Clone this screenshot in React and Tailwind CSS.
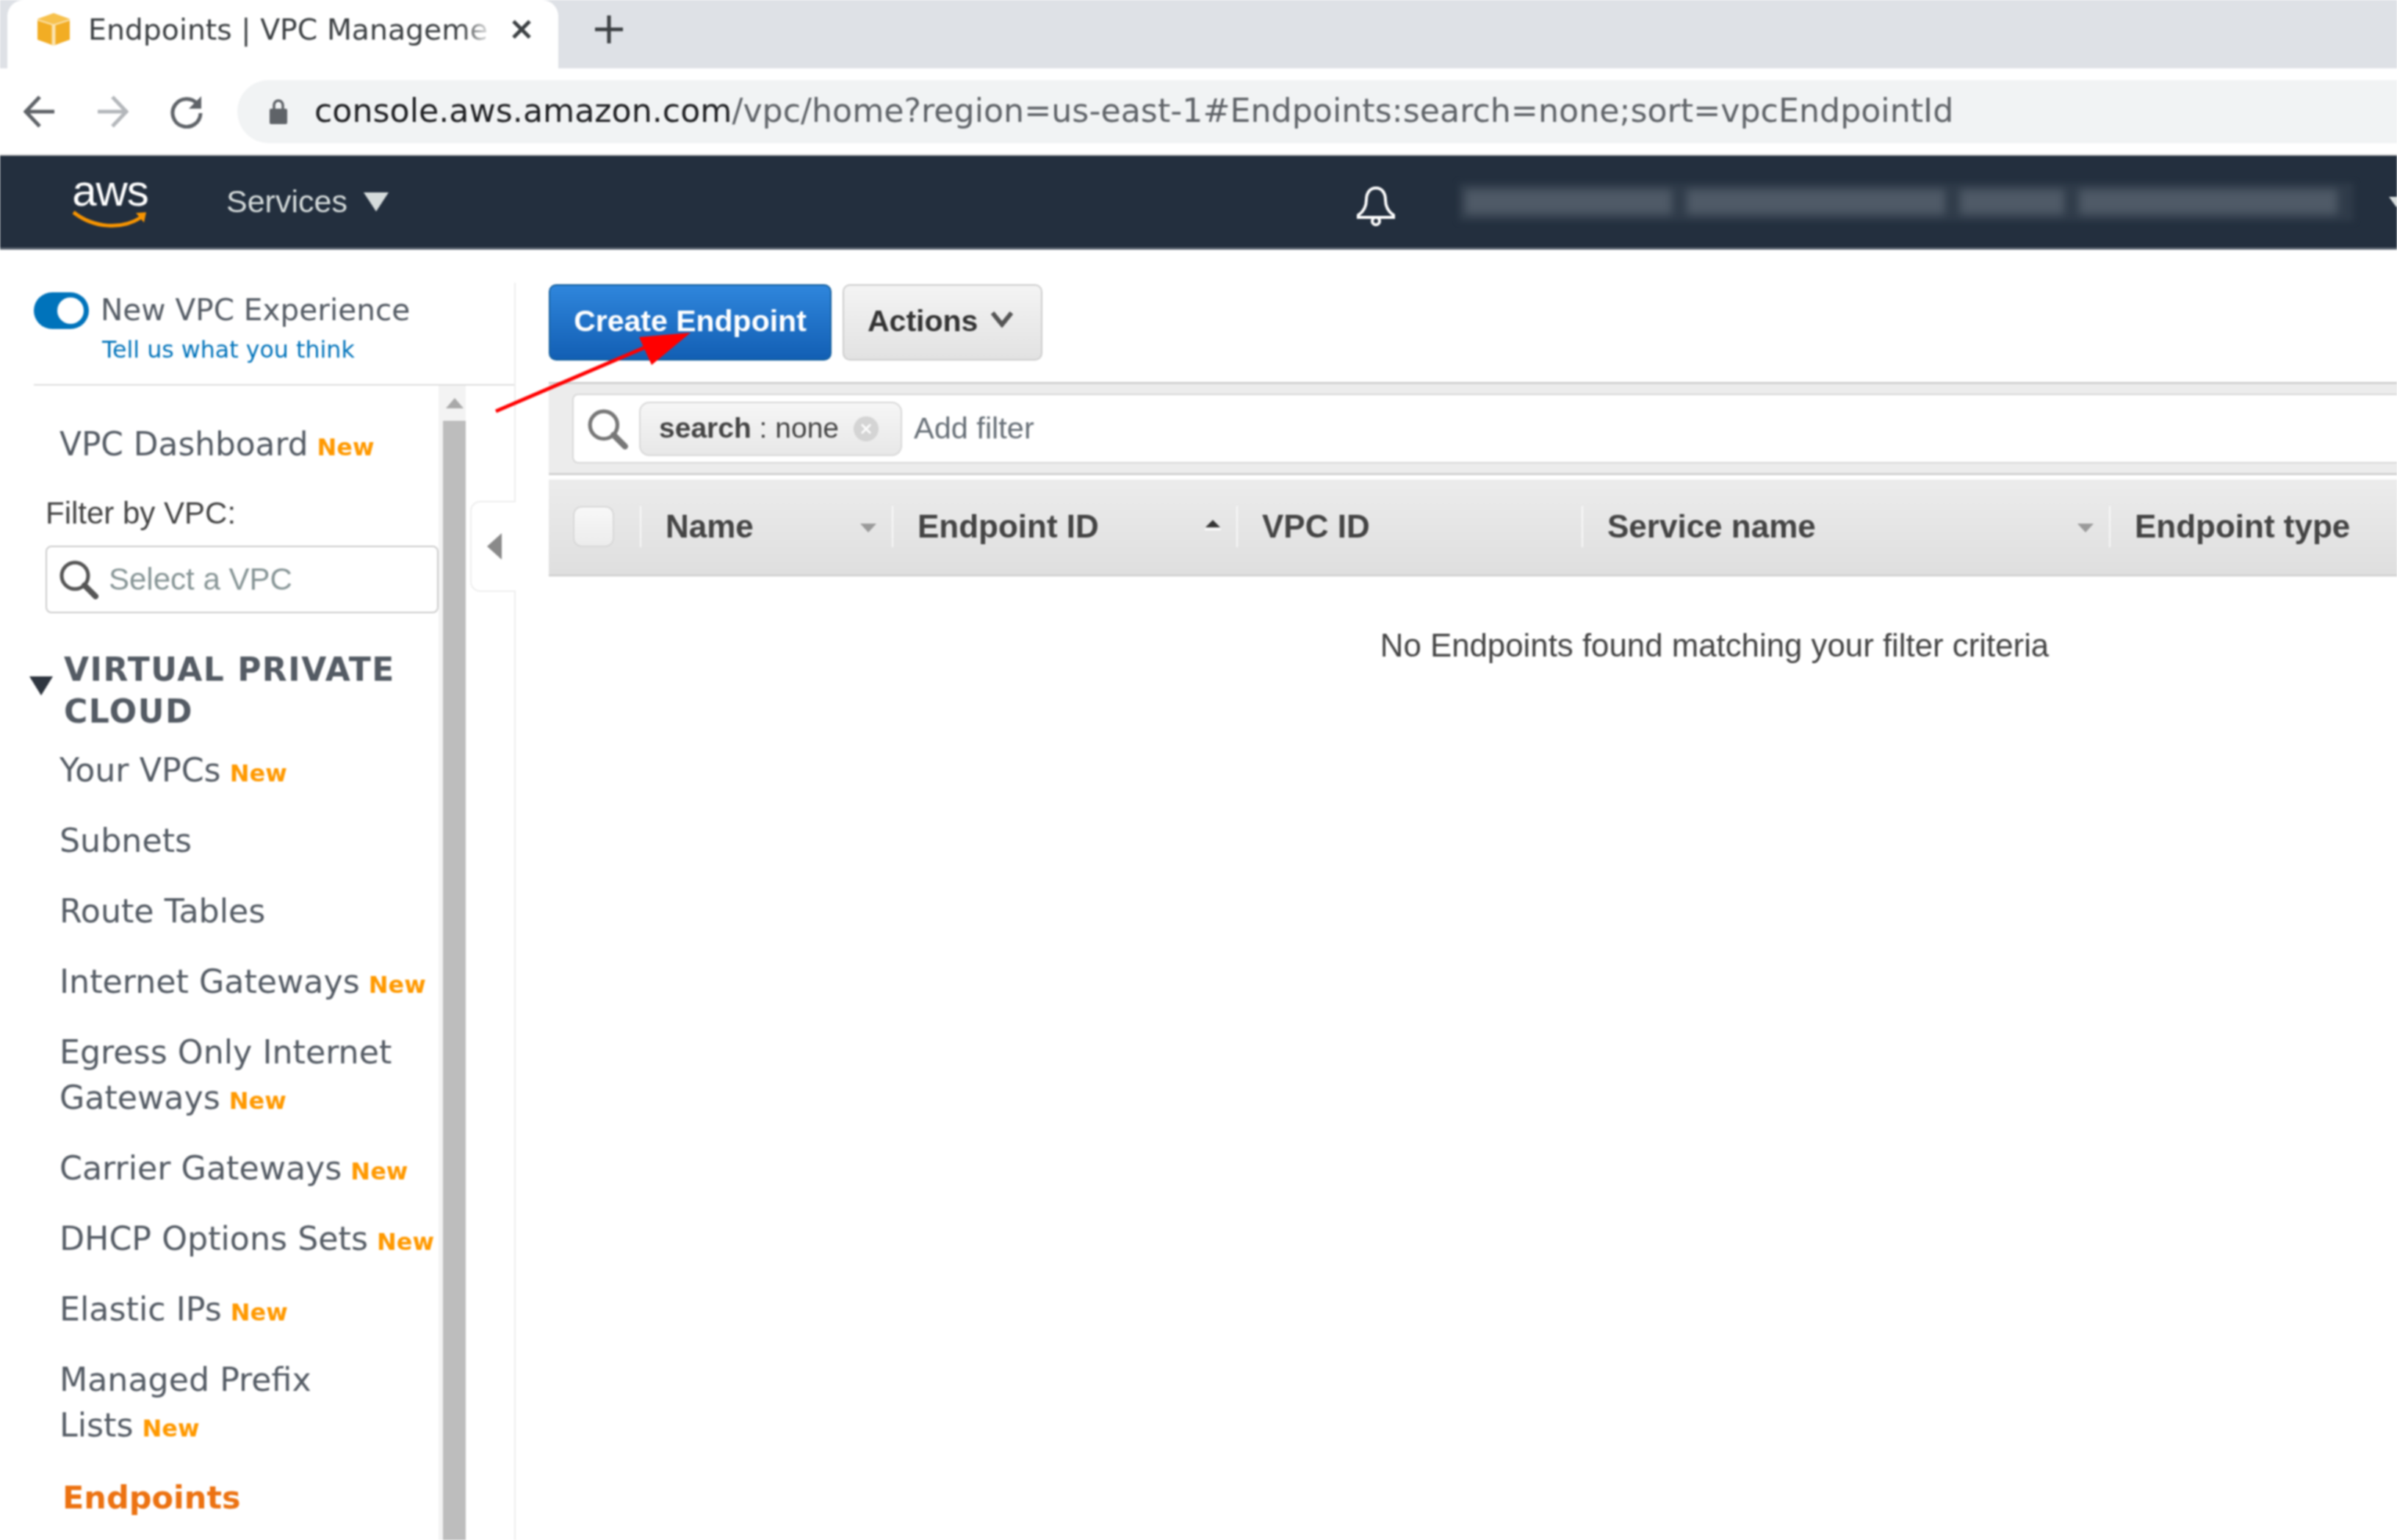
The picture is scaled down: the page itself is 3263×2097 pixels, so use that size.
const dv = "[font-family:'DejaVu_Sans',sans-serif]";

function NewTag() {
  return <span className="ml-[12px] text-[32px] leading-none font-bold text-[#ff9900]">New</span>;
}

function Item({ label, second, isNew, active }) {
  return (
    <div className={`leading-[62px] ${active ? "mt-[36px] ml-[4px] text-[43px] font-bold text-[#ec7211]" : "mt-[34px] text-[44.3px] text-[#545b64]"}`}>
      {label}
      {second ? <br /> : null}
      {second}
      {isNew ? <NewTag /> : null}
    </div>
  );
}

function Column({ label, width, arrow }) {
  return (
    <div className={`${width} h-[56px] shrink-0 border-l-[2px] border-[#f8f8f8] pl-[33px] pr-[20px] flex items-center justify-between`}>
      <span className="text-[44px] font-bold text-[#444444]">{label}</span>
      {arrow === "down" ? (
        <svg width="24" height="14" viewBox="0 0 24 14" className="mt-[4px]"><path d="M1 1h22L12 13z" fill="#9a9a9a" /></svg>
      ) : null}
      {arrow === "up" ? (
        <svg width="24" height="16" viewBox="0 0 24 16" className="-mt-[4px]"><path d="M2 11h20L12 1z" fill="#333333" /><path d="M1 14h22" stroke="#ffffff" strokeWidth="2" /></svg>
      ) : null}
    </div>
  );
}

function SearchGlyph({ size, color }) {
  return (
    <svg width={size} height={size} viewBox="0 0 54 54" fill="none" stroke={color} strokeLinecap="round">
      <circle cx="22" cy="22" r="18" strokeWidth="5" />
      <path d="M35 35l15 15" strokeWidth="8" />
    </svg>
  );
}

export default function App() {
  return (
    <div className="relative w-[3263px] h-[2097px] overflow-hidden bg-white flex flex-col blur-[0.8px] [font-family:'Liberation_Sans',Arial,sans-serif]">
      {/* tab strip */}
      <div className={`h-[93px] shrink-0 bg-[#dee1e6] flex items-stretch pl-[10px] ${dv}`}>
        <div className="w-[750px] h-[93px] bg-white rounded-t-[22px] flex items-center pl-[40px] pb-[14px] relative">
          <svg width="46" height="44" viewBox="0 0 46 44" className="shrink-0">
            <path d="M1 8L23 0l22 8v28l-22 8-22-8z" fill="#f2ad24" />
            <path d="M1 8l22 7 22-7-22-8z" fill="#f7c14c" />
            <path d="M23 15v29" stroke="#fbe3ae" strokeWidth="5" />
            <path d="M1 9l22 7 22-7" stroke="#fbe3ae" strokeWidth="2" fill="none" />
          </svg>
          <div className="ml-[24px] w-[552px] whitespace-nowrap text-[39.4px] leading-[60px] text-[#3c4043] relative">
            Endpoints | VPC Manageme
            <div className="absolute right-0 top-0 w-[44px] h-full bg-gradient-to-r from-transparent to-white" />
          </div>
          <svg width="28" height="28" viewBox="0 0 28 28" className="ml-[24px] shrink-0">
            <path d="M3 3l22 22M25 3L3 25" stroke="#3c4043" strokeWidth="5" />
          </svg>
        </div>
        <div className="ml-[49px] flex items-center pb-[14px]">
          <svg width="40" height="40" viewBox="0 0 40 40"><path d="M20 1v38M1 20h38" stroke="#3c4043" strokeWidth="5" /></svg>
        </div>
      </div>

      {/* toolbar */}
      <div className={`h-[119px] shrink-0 bg-white border-b-[2px] border-[#d4d4d4] flex items-center pl-[32px] ${dv}`}>
        <svg width="44" height="44" viewBox="0 0 44 44" fill="none" stroke="#5f6368" strokeWidth="5"><path d="M42 22H4M22 2L3 22l19 20" /></svg>
        <svg width="44" height="44" viewBox="0 0 44 44" fill="none" stroke="#b4b7bb" strokeWidth="5" className="ml-[55px]"><path d="M2 22h38M22 2l19 20-19 20" /></svg>
        <svg width="46" height="46" viewBox="0 0 46 46" fill="none" className="ml-[56px]">
          <path d="M38 13A19 19 0 1 0 42 25" stroke="#5f6368" strokeWidth="5" />
          <path d="M43 2v17H26z" fill="#5f6368" />
        </svg>
        <div className="ml-[46px] flex-1 h-[86px] bg-[#f1f3f4] rounded-l-[43px] flex items-center pl-[43px]">
          <svg width="26" height="36" viewBox="0 0 26 36" className="shrink-0">
            <path d="M7 16V9a6 6 0 0 1 12 0v7" fill="none" stroke="#5f6368" strokeWidth="3.5" />
            <rect x="1" y="14" width="24" height="21" rx="2" fill="#5f6368" />
          </svg>
          <div className="ml-[36px] text-[44.3px] whitespace-nowrap">
            <span className="text-[#202124]">console.aws.amazon.com</span>
            <span className="text-[#5f6368]">/vpc/home?region=us-east-1#Endpoints:search=none;sort=vpcEndpointId</span>
          </div>
        </div>
      </div>

      {/* aws nav */}
      <div className="h-[128px] shrink-0 bg-[#232f3e] border-b-[3px] border-[#5b6570] flex items-center pl-[99px] pr-[6px]">
        <div className="w-[102px] flex flex-col items-center -mt-[2px]">
          <span className="text-[60px] leading-[44px] text-white tracking-[-1px]">aws</span>
          <svg width="102" height="24" viewBox="0 0 102 24" fill="none" className="mt-[4px]">
            <path d="M1 3c28 22 66 24 92 7" stroke="#f79400" strokeWidth="5" />
            <path d="M86 4l14-1-3 14z" fill="#f79400" />
          </svg>
        </div>
        <span className="ml-[107px] text-[43px] text-[#d5dbdb]">Services</span>
        <svg width="36" height="26" viewBox="0 0 36 26" className="ml-[21px] shrink-0"><path d="M1 0h34L18 26z" fill="#d5dbdb" /></svg>
        <svg width="54" height="54" viewBox="0 0 54 54" fill="none" stroke="#ffffff" strokeWidth="4" className="ml-[1316px] mt-[12px] shrink-0">
          <path d="M27 2c-9 0-13 8-13 16 0 10-5 17-11 21v3h48v-3c-6-4-11-11-11-21 0-8-4-16-13-16z" />
          <circle cx="27" cy="47" r="5" />
        </svg>
        <div className="ml-[86px] w-[1218px] h-[52px] shrink-0 bg-[#2f3b49] blur-[4px] flex items-center gap-[20px] pl-[8px]">
          <div className="w-[282px] h-[34px] bg-[#4f5a67] blur-[4px]" />
          <div className="w-[352px] h-[34px] bg-[#4f5a67] blur-[4px]" />
          <div className="w-[142px] h-[34px] bg-[#4f5a67] blur-[4px]" />
          <div className="w-[352px] h-[34px] bg-[#4f5a67] blur-[4px]" />
        </div>
        <svg width="20" height="14" viewBox="0 0 20 14" className="ml-[48px] shrink-0"><path d="M0 0h20L10 14z" fill="#d5dbdb" /></svg>
      </div>

      {/* body */}
      <div className="flex-1 min-h-0 pt-[45px] flex">
        {/* sidebar */}
        <div className="relative w-[702px] shrink-0 border-r-[2px] border-[#eeeeee] pl-[46px] flex flex-col text-[#545b64]">
          <div className={`h-[140px] shrink-0 border-b-[2px] border-[#dddddd] ${dv}`}>
            <div className="flex items-center pt-[13px]">
              <div className="w-[75px] h-[50px] rounded-full bg-[#0073bb] flex items-center justify-end pr-[7px]">
                <div className="w-[36px] h-[36px] rounded-full bg-white" />
              </div>
              <span className="ml-[16px] -mt-[2px] text-[40.6px] leading-[50px] text-[#545b64]">New VPC Experience</span>
            </div>
            <div className="ml-[93px] mt-[3px] text-[31.7px] leading-[50px] text-[#0073bb]">Tell us what you think</div>
          </div>
          <div className="flex-1 min-h-0 flex -ml-[46px] overflow-hidden">
            <div className="w-[597px] shrink-0">
              <div className={`pl-[81px] pt-[49px] text-[43.8px] leading-[62px] whitespace-nowrap ${dv}`}>
                VPC Dashboard<NewTag />
              </div>
              <div className="pl-[62px] mt-[32px] text-[42px] leading-[62px] text-[#444444]">Filter by VPC:</div>
              <div className="ml-[62px] mt-[13px] h-[92px] w-[535px] border-[2px] border-[#cccccc] rounded-[8px] flex items-center pl-[16px]">
                <SearchGlyph size={54} color="#555555" />
                <span className="ml-[14px] -mt-[2px] text-[42px] text-[#879596]">Select a VPC</span>
              </div>
              <div className={`relative pl-[87px] mt-[48px] text-[44px] font-bold leading-[57px] tracking-[1.5px] ${dv}`}>
                <svg width="32" height="26" viewBox="0 0 32 26" className="absolute left-[40px] top-[38px]"><path d="M0 0h32L16 26z" fill="#2f3640" /></svg>
                VIRTUAL PRIVATE<br />CLOUD
              </div>
              <div className={`pl-[81px] -mt-[13px] whitespace-nowrap ${dv}`}>
                <Item label="Your VPCs" isNew />
                <Item label="Subnets" />
                <Item label="Route Tables" />
                <Item label="Internet Gateways" isNew />
                <Item label="Egress Only Internet" second="Gateways" isNew />
                <Item label="Carrier Gateways" isNew />
                <Item label="DHCP Options Sets" isNew />
                <Item label="Elastic IPs" isNew />
                <Item label="Managed Prefix" second="Lists" isNew />
                <Item label="Endpoints" active />
              </div>
            </div>
            <div className="w-[37px] shrink-0 bg-[#f3f3f3] flex flex-col items-end">
              <div className="h-[48px] w-[37px] flex items-center justify-center pl-[6px]">
                <svg width="24" height="14" viewBox="0 0 24 14"><path d="M0 14h24L12 0z" fill="#a9a9a9" /></svg>
              </div>
              <div className="flex-1 w-[31px] bg-[#bdbdbd]" />
            </div>
          </div>
          {/* collapse handle */}
          <div className="absolute left-[640px] top-[297px] w-[62px] h-[124px] bg-white border-[2px] border-r-0 border-[#eeeeee] rounded-l-[14px] flex items-center pl-[21px]">
            <svg width="20" height="36" viewBox="0 0 20 36"><path d="M20 0v36L0 18z" fill="#8a8a8a" /></svg>
          </div>
        </div>

        {/* main */}
        <div className="flex-1 min-w-0 overflow-hidden pl-[45px]">
          <div className="w-[3174px]">
            <div className="flex pt-[2px] gap-[15px]">
              <div className="w-[385px] h-[104px] rounded-[10px] border-[2px] border-[#15609f] bg-gradient-to-b from-[#2f86dc] to-[#125fb4] flex items-center justify-center pb-[2px] text-[41px] font-bold text-white">
                Create Endpoint
              </div>
              <div className="w-[272px] h-[104px] rounded-[10px] border-[2px] border-[#cccccc] bg-gradient-to-b from-[#f4f4f4] to-[#e2e2e2] flex items-center pl-[32px] pb-[2px]">
                <span className="text-[41px] font-bold text-[#333333]">Actions</span>
                <svg width="30" height="22" viewBox="0 0 30 22" fill="none" className="ml-[18px] -mt-[6px]">
                  <path d="M2 2l13 16L28 2" stroke="#555555" strokeWidth="6" />
                </svg>
              </div>
            </div>

            <div className="mt-[29px] h-[127px] bg-[#ececec] border-t-[3px] border-b-[3px] border-[#d2d2d2] pt-[13px] pl-[32px]">
              <div className="h-[95px] bg-white border-[2px] border-[#d8d8d8] rounded-l-[8px] flex items-center pl-[18px]">
                <SearchGlyph size={56} color="#777777" />
                <div className="ml-[15px] w-[358px] h-[74px] rounded-[14px] border-[2px] border-[#d8d8d8] bg-gradient-to-b from-[#f6f6f6] to-[#e8e8e8] flex items-center pl-[25px] whitespace-nowrap text-[39px] text-[#444444]">
                  <span className="font-bold">search</span>&nbsp;: none
                  <div className="ml-[20px] w-[34px] h-[34px] rounded-full bg-[#d4d4d4] flex items-center justify-center shrink-0">
                    <svg width="16" height="16" viewBox="0 0 16 16"><path d="M2 2l12 12M14 2L2 14" stroke="#ffffff" strokeWidth="2.5" /></svg>
                  </div>
                </div>
                <span className="ml-[16px] text-[41.5px] text-[#687078]">Add filter</span>
              </div>
            </div>

            <div className="mt-[6px] h-[132px] bg-gradient-to-b from-[#ececec] to-[#dfdfdf] border-b-[3px] border-[#d2d2d2] flex items-center pb-[2px]">
              <div className="w-[124px] shrink-0 pl-[33px]">
                <div className="w-[56px] h-[56px] rounded-[12px] border-[2px] border-[#d8d8d8] bg-gradient-to-b from-[#f8f8f8] to-[#ececec]" />
              </div>
              <Column label="Name" width="w-[343px]" arrow="down" />
              <Column label="Endpoint ID" width="w-[469px]" arrow="up" />
              <Column label="VPC ID" width="w-[470px]" />
              <Column label="Service name" width="w-[718px]" arrow="down" />
              <Column label="Endpoint type" width="w-[600px]" />
            </div>

            <div className="mt-[67px] text-center text-[43.8px] leading-[54px] text-[#444444]">
              No Endpoints found matching your filter criteria
            </div>
          </div>
        </div>
      </div>

      {/* annotation arrow */}
      <svg className="absolute left-0 top-0 pointer-events-none" width="1000" height="600" viewBox="0 0 1000 600">
        <path d="M675 560L885 470" stroke="#ff0000" strokeWidth="5" />
        <path d="M870 459L940 453L887 497z" fill="#ff0000" />
      </svg>
    </div>
  );
}
